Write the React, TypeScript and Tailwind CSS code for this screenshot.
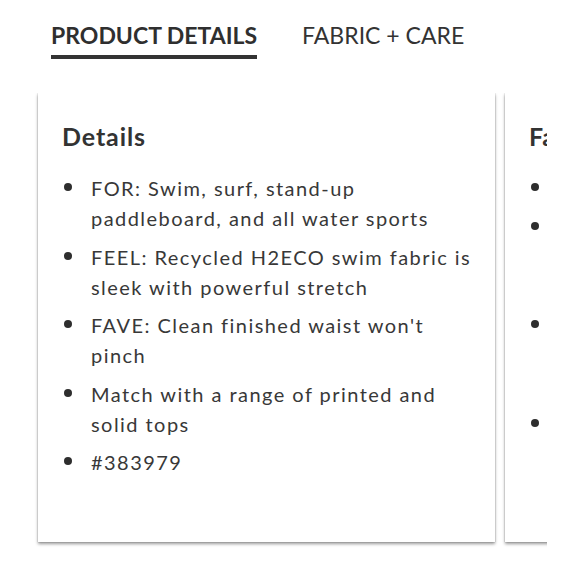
const DETAILS = [
  ["FOR: Swim, surf, stand-up", "paddleboard, and all water sports"],
  ["FEEL: Recycled H2ECO swim fabric is", "sleek with powerful stretch"],
  ["FAVE: Clean finished waist won't", "pinch"],
  ["Match with a range of printed and", "solid tops"],
  ["#383979"],
];

const FABRIC = [
  ["Recycled nylon, spandex"],
  ["H2ECO fabric: 78% recycled nylon,", "22% spandex, quick-drying with", "UPF 50+ sun protection built in"],
  ["Machine wash cold, gentle cycle,", "line dry in the shade. Rinse in", "cold fresh water after every use"],
  ["Imported"],
];

function Card({ title, items }: { title: string; items: string[][] }) {
  return (
    <div className="w-[457px] h-[449px] shrink-0 bg-white pl-[24px] pr-[20px] pt-[27px] shadow-[0_0_1px_rgba(0,0,0,0.35),0_2px_3px_rgba(0,0,0,0.4)]">
      <h3 className="text-[25px] leading-[32px] font-bold tracking-[0.9px] text-[#333]">{title}</h3>
      <ul className="mt-[21px] flex flex-col gap-[8.5px]">
        {items.map((lines) => (
          <li key={lines[0]} className="flex">
            <span className="mt-[10px] ml-[2px] h-[8px] w-[8px] shrink-0 rounded-full bg-[#2e2e2e]" />
            <span className="ml-[19px] flex flex-col text-[20px] leading-[30px] tracking-[1.45px] whitespace-nowrap text-[#383838]">
              {lines.map((l) => (
                <span key={l}>{l}</span>
              ))}
            </span>
          </li>
        ))}
      </ul>
    </div>
  );
}

export default function App() {
  return (
    <div className="w-[580px] h-[580px] bg-white font-['Lato',sans-serif]">
      <div className="flex items-start gap-[45px] pl-[51px] pt-[19px]">
        <div className="flex flex-col">
          <span className="text-[23px] leading-[32px] font-bold text-[#2f2f2f]">PRODUCT DETAILS</span>
          <span className="mt-[4px] h-[4px] w-full bg-[#333]" />
        </div>
        <span className="text-[23px] leading-[32px] text-[#333]">FABRIC + CARE</span>
      </div>
      <div className="mt-[34px] w-[547px] overflow-hidden">
        <div className="flex gap-[10px] pl-[38px] pb-[8px]">
          <Card title="Details" items={DETAILS} />
          <Card title="Fabric + Care" items={FABRIC} />
        </div>
      </div>
    </div>
  );
}
